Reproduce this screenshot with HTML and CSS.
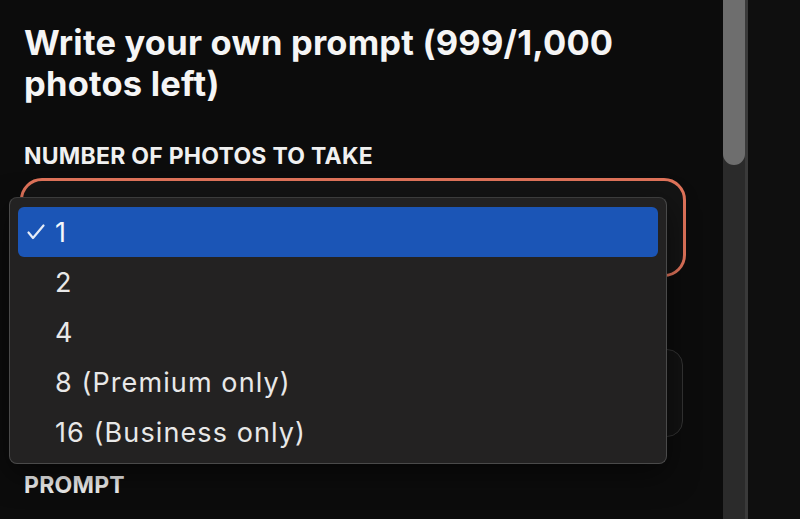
FILE: index.html
```html
<!DOCTYPE html>
<html>
<head>
<meta charset="utf-8">
<link rel="stylesheet" href="styles.css">
</head>
<body>
<div class="page">
  <main class="main">
    <h1 class="title">Write your own prompt (999/1,000 photos left)</h1>
    <div class="label">NUMBER OF PHOTOS TO TAKE</div>
    <div class="select"></div>
    <div class="spacer"></div>
    <div class="box"></div>
    <div class="label label-prompt">PROMPT</div>
    <div class="menu">
      <div class="item selected"><span class="check"><svg width="18" height="16" viewBox="0 0 18 16"><path d="M1.5 8.5 L6 14 L16.5 1.5" fill="none" stroke="#e6ecf7" stroke-width="2.2" stroke-linecap="round" stroke-linejoin="round"/></svg></span>1</div>
      <div class="item"><span class="check"></span>2</div>
      <div class="item"><span class="check"></span>4</div>
      <div class="item"><span class="check"></span>8 (Premium only)</div>
      <div class="item"><span class="check"></span>16 (Business only)</div>
    </div>
  </main>
  <div class="scrollbar"><div class="thumb"></div></div>
  <div class="side"></div>
</div>
</body>
</html>
```
FILE: styles.css
```css
html, body {
  margin: 0;
  padding: 0;
  background: #0c0c0c;
}
.page {
  display: flex;
  width: 800px;
  height: 519px;
  overflow: hidden;
  font-family: Inter, "Liberation Sans", sans-serif;
}
.main {
  position: relative;
  width: 723px;
  padding: 0 37px 0 20px;
  box-sizing: border-box;
}
.title {
  margin: 22px 0 0 4px;
  font-size: 34.5px;
  line-height: 41px;
  font-weight: 700;
  color: #f5f5f5;
  letter-spacing: 0.2px;
}
.label {
  margin: 38px 0 0 4px;
  font-size: 23px;
  line-height: 28px;
  font-weight: 700;
  color: #f0f0f0;
  letter-spacing: 0.25px;
}
.select {
  margin-top: 8px;
  height: 99px;
  box-sizing: border-box;
  border: 3px solid #e0735a;
  border-radius: 22px;
  background: #141414;
}
.spacer {
  height: 72px;
}
.box {
  height: 88px;
  margin-right: 3px;
  box-sizing: border-box;
  border: 1px solid #333;
  border-radius: 16px;
  background: #121212;
}
.label-prompt {
  margin-top: 34px;
}
.menu {
  position: absolute;
  left: 9px;
  top: 197px;
  width: 658px;
  height: 267px;
  box-sizing: border-box;
  padding: 9px 8px;
  background: #232222;
  border: 1px solid #4a4a4a;
  border-top-color: #3c3c3c;
  border-radius: 8px;
  box-shadow: 0 10px 30px rgba(0,0,0,0.5);
}
.item {
  display: flex;
  align-items: center;
  height: 50px;
  border-radius: 6px;
  font-size: 27px;
  letter-spacing: 1.1px;
  color: #e8e8e8;
}
.item.selected {
  background: #1b55b6;
  color: #f6f8fc;
}
.check {
  width: 37px;
  padding-left: 9px;
  box-sizing: border-box;
  display: flex;
  align-items: center;
}
.scrollbar {
  width: 25px;
  background: #2b2b2b;
  border-right: 3px solid #3a3a3a;
  box-sizing: border-box;
}
.thumb {
  width: 22px;
  height: 165px;
  background: #6e6e6e;
  border-radius: 0 0 11px 11px;
}
.side {
  flex: 1;
  background: #0f0f0f;
}
```
